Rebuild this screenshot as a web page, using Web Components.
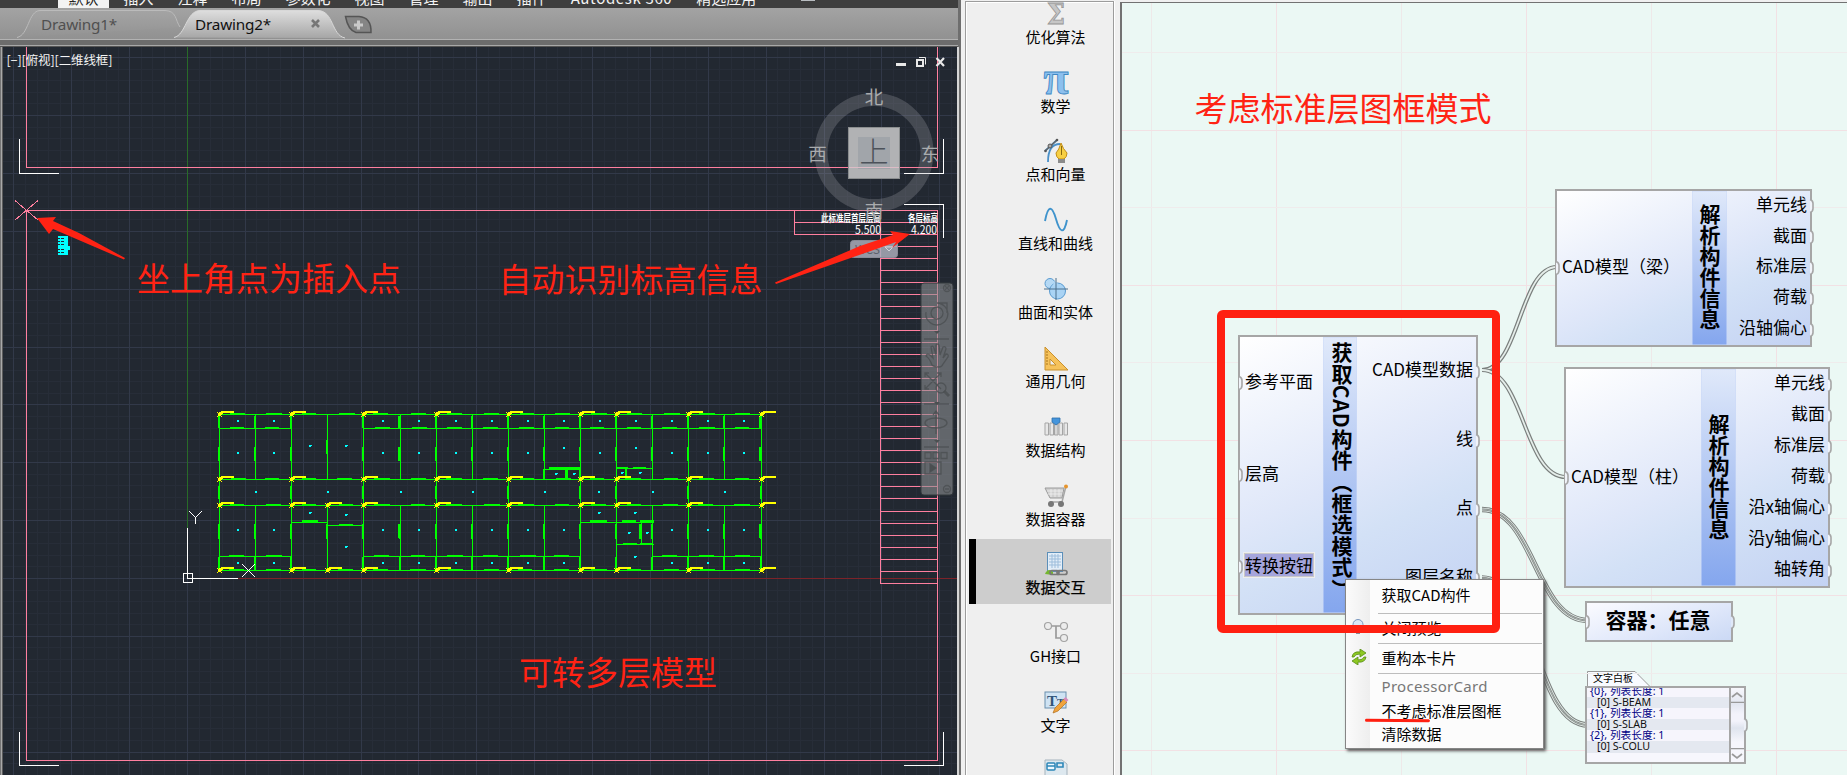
<!DOCTYPE html>
<html lang="zh-CN">
<head>
<meta charset="utf-8">
<title>CAD 构件转换</title>
<style>
html,body{margin:0;height:100%;overflow:hidden;background:#f0f0f0}
body{font-family:"Noto Sans CJK SC","Noto Sans",sans-serif;color:#000}
</style>
</head>
<body>
<work-bench></work-bench>
<script>
const define=(name,html,setup)=>customElements.define(name,class extends HTMLElement{
  connectedCallback(){
    if(this.shadowRoot)return;
    const r=this.attachShadow({mode:'open'});
    r.innerHTML=typeof html==='function'?html(this):html;
    if(setup)setup(this,r);
  }
});

/* ---------- CAD window ---------- */
define('ribbon-menu',`<style>
:host{display:flex;height:8px;overflow:hidden;background:#3e3e3e;color:#f4f4f4;font-size:15px;line-height:20px;gap:9px;padding-left:58px;box-sizing:border-box;white-space:nowrap}
span{margin-top:-12.500px;height:20.500px;padding:0 7.5px}
span.on{background:#f3f3f3;color:#222;padding:0 10.5px;margin-right:-2px}
i{width:14px;height:1px;background:#b8bcc0;margin-left:28px}
</style><span class="on">默认</span><span>插入</span><span>注释</span><span>布局</span><span>参数化</span><span>视图</span><span>管理</span><span>输出</span><span>插件</span><span style="letter-spacing:.65px">Autodesk 360</span><span>精选应用</span><i></i>`);

define('file-tab',el=>{const on=el.hasAttribute('active');return `<style>
:host{display:block;position:relative;width:${on?173:163}px;height:29px;font:15.3px/29px "Noto Sans","Open Sans",sans-serif;color:${on?'#111':'#505050'}}
svg{position:absolute;left:0;top:0}
div{position:relative;padding-left:${on?21:24}px;white-space:nowrap;letter-spacing:-.2px}
</style><svg width="175" height="29"><defs><linearGradient id="g" x2="0" y2="1"><stop stop-color="${on?'#dedede':'#a4a4a4'}"/><stop offset="1" stop-color="${on?'#a6a6a6':'#939393'}"/></linearGradient></defs>
<path d="${on?'M0 27.500C12 25 12 1 26 .5H144C160 1 157 25 171 28':'M0 27.500C12 25 11 1 23 .5H148C160 1 158 10 163 17'}" fill="url(#g)" stroke="${on?'#d8d8d8':'#bbb'}"/></svg>
<div><slot></slot>${on?'<svg width="12" height="12" style="left:136px;top:8px"><path d="M2 2l7 7M9 2l-7 7" stroke="#777" stroke-width="2.600"/></svg>':''}</div>`});

define('tab-strip',`<style>
:host{display:flex;align-items:flex-end;height:32px;background:linear-gradient(#a3a3a3,#919191);border-bottom:1px solid #b2b2b2;padding-left:17px;box-sizing:border-box}
file-tab[active]{margin-left:-6px}
svg{align-self:center;margin:3px 0 0 -3.500px}
</style><file-tab>Drawing1*</file-tab><file-tab active>Drawing2*</file-tab>
<svg width="29" height="20"><path d="M1.500 1.500H15Q27.500 2.500 27 17.500H12Q4 15 1.500 1.500Z" fill="#858585" stroke="#555" stroke-width="1.500"/><path d="M14.500 5.500v9M10 10h9" stroke="#c9c9c9" stroke-width="3"/></svg>`);

const px=(x,y,w,h,c)=>`<rect x="${x}" y="${y}" width="${w}" height="${h}" fill="${c}"/>`;
function gridLines(){
  let minor='',major='';
  for(let k=-16;k<=67;k++){const x=Math.round(187+k*57.87/5);if(x<3||x>956)continue;
    if(k%5)minor+=px(x,47,1,728,'#272d38');else major+=px(x,47,1,728,'#323949');}
  for(let k=-46;k<=17;k++){const y=Math.round(578+k*57.87/5);if(y<47||y>774)continue;
    if(k%5)minor+=px(3,y,954,1,'#272d38');else major+=px(3,y,954,1,'#323949');}
  return minor+major;
}
function plan(){
  const X=[219,255,291,327,363,400,436,472,508,544,580,616,652,688,724,761],G='#00ff00';let s='',n=3;
  const rnd=()=>(n=(n*73+41)%101)/101;
  const h=(a,b,y)=>{s+=px(a,y,b-a+1,1,G)};
  const v=(x,a,b)=>{s+=px(x,a,1,b-a+1,G)};
  const tagH=(x,y)=>{s+=px(x+10+Math.round(rnd()*2),y-1,14+Math.round(rnd()*2),1,G)};
  const tagV=(x,y,l)=>{s+=px(x-1,y,1,l,G)};
  for(const y of [414,479,505,570])h(219,761,y);
  h(219,291,428);h(363,761,428);h(219,291,556);h(363,580,556);h(652,761,556);
  h(291,327,522);h(327,363,525);h(544,580,469);h(616,652,468);h(580,653,522);h(616,653,544);
  X.forEach((x,i)=>{
    const main=[219,291,363,436,508,580,616,688,761].includes(x);
    v(x,414,479);v(x,505,570);if(main)v(x,479,505);
    if(x!==327)tagV(x,416,12);
    tagV(x,x===327?440:447,14);
    if(main)tagV(x,486,13);
    tagV(x,524,15);if(x!==327)tagV(x,557,13);
    if(x===400||x===761){tagV(x-1,416,12);tagV(x-1,447,14);tagV(x-1,524,14);}
    if(i<15)for(const y of [414,428,479,505,556,570]){
      if((y===428||y===556)&&(x===291||x===327))continue;
      if(y===556&&(x===580||x===616))continue;
      tagH(x,y);
    }
  });
  s+=px(302,520,16,2,G)+px(339,524,14,1,G)+px(549,467,20,2,G)+px(567,467,12,2,G)+px(565,468,3,12,G)+px(616,467,12,2,G)+px(633,467,13,1,G)+px(543,469,2,11,G)+px(579,467,1,12,G)+px(625,468,2,11,G)+px(590,520,17,2,G)+px(622,520,14,2,G)+px(640,520,14,2,G)+px(641,522,1,22,G)+px(639,524,2,15,G)+px(623,543,14,1,G)+px(640,543,13,2,G);
  const Y='#ffff00';
  for(const y of [414,479,505,570])for(const x of [219,291,327,363,436,508,580,616,688,761]){
    if(x===327&&y<500)continue;
    s+=px(x+2,y-3,13,2,Y)+px(x,y-2,4,2,Y)+px(x-1,y-1,3,3,Y)+px(x-2,y-2,1,1,Y)+px(x+2,y+2,1,1,Y)+px(x-2,y+2,1,1,Y)+px(x+2,y,1,1,Y);
    if(y===414)s+=px(x+2,y-2,10,1,Y);
  }
  const C='#00ffff',d=(x,y)=>{s+=px(x-1,y-1,2,2,C)};
  [237,273,382,418,455,491,527,563,599,635,671,707,743].forEach(x=>{d(x+1,421);d(x+1,x===563||x===635?448:453);if(x!==599&&x!==635){d(x+1,530);d(x+1,563)}});
  [256,328,401,473,545,599,653,725].forEach(x=>d(x,492));
  [[310,446],[346,446],[310,513],[346,515],[346,547],[599,513],[635,513],[629,533],[647,533],[635,557],[556,474],[574,474],[622,473],[640,473]].forEach(p=>{d(...p);s+=px(p[0]+1,p[1]-1,1,1,C)});
  return s;
}
function frames(){
  const P='#ff7f9f',W='#fff';let s='';
  s+=px(26,47,1,121,P)+px(26,167,912,1,P)+px(937,47,1,121,P);
  s+=px(26,210,912,1,P)+px(26,210,1,551,P)+px(26,760,912,1,P)+px(937,210,1,551,P);
  s+=px(19,139,1,35,W)+px(19,173,40,1,W)+px(943,139,1,35,W)+px(904,173,40,1,W)+px(904,204,40,1,W)+px(943,204,1,34,W)+px(19,732,1,34,W)+px(19,765,40,1,W)+px(943,732,1,34,W)+px(904,765,40,1,W);
  s+=`<path d="M15 200.500l23 19.500M38 200.500L15 220" stroke="${P}"/>`;
  s+=px(794,210,1,25,P)+px(794,222,144,1,P)+px(794,234,144,1,P)+px(880,222,1,362,P);
  for(let i=0;i<29;i++)s+=px(880,246+i*12+(i>21?1:0),58,1,P);
  return s;
}
define('cad-view',()=>`<style>
:host{display:block;height:100%;position:relative;overflow:hidden;background:#222831}
svg{display:block;position:absolute;left:-3px;top:-47px}
text{font-family:"Noto Sans CJK SC",sans-serif}
</style><svg width="960" height="775" shape-rendering="crispEdges">
${gridLines()}
${px(187,47,1,481,'#286b28')}${px(238,578,719,1,'#7d2329')}
${frames()}
<g fill="#fff"><text x="821" y="222" font-size="10.500" font-weight="700" textLength="60" lengthAdjust="spacingAndGlyphs">此标准层首层层高</text>
<text x="908" y="222" font-size="10.500" font-weight="700" textLength="30" lengthAdjust="spacingAndGlyphs">各层标高</text>
<text x="855" y="234" font-size="11.500" textLength="26" lengthAdjust="spacingAndGlyphs">5.500</text>
<text x="911" y="234" font-size="11.500" textLength="26" lengthAdjust="spacingAndGlyphs">4.200</text></g>
${plan()}
${[236,239,242,245,247,250,253].map(y=>px(58,y,10,2,'#0ff')).join('')}${px(64,236,4,19,'#0ff')}${px(68,246,2,4,'#0ff')}${px(60,236,1,19,'#0ff')}
<g fill="none" stroke="#fff"><path d="M187.500 528V578.500H238M183.500 573.500h9v9h-9zM189 511l6.500 6.500v6M202 511l-6.500 6.500"/><path d="M242 564l13 13M255 564l-13 13"/></g>
<g shape-rendering="auto">
<circle cx="874" cy="152.500" r="53" fill="none" stroke="#a5a8ae" stroke-opacity=".27" stroke-width="13"/>
<rect x="848.500" y="127.500" width="51" height="51" fill="#b1b2b4" stroke="#8b8e8f"/><rect x="858" y="137" width="32" height="32" fill="#a1a5aa"/>
<rect x="849" y="167" width="50" height="1" fill="#dcbcc6"/>
<text x="874" y="162.500" font-size="29" font-weight="300" text-anchor="middle" fill="#4c525a">上</text>
<g fill="#a9abad" font-size="18.500" text-anchor="middle"><text x="874" y="104">北</text><text x="817.500" y="160.500">西</text><text x="930" y="160.500">东</text><text x="874" y="218">南</text></g>
<rect x="850.500" y="240.500" width="47" height="17" rx="3" fill="#a9abb9" fill-opacity=".85" stroke="#888b96"/><text x="855" y="253.500" font-size="12" fill="#5d616c">WCS</text><path d="M885 247h8l-4 4z" fill="none" stroke="#d3d4da"/>
<rect x="921" y="283" width="32" height="212" rx="3" fill="#8d9092" fill-opacity=".6" stroke="#33383c"/>
<g fill="none" stroke="#4b4f51" stroke-opacity=".8" stroke-width="1.300"><circle cx="947" cy="288" r="3.500"/><path d="M945 286l4 4m0-4l-4 4M926 312a11 11 0 1 0 11-9h10v10"/><circle cx="937" cy="313" r="6"/>
<path d="M932 365q-2-6-6-9 1-3 4-1l3 3-2-11q2-2 3 1l2 7v-10q2-2 3 0l1 10 3-8q3-1 3 2l-3 9 3-4q3 0 2 3l-5 7q-1 3-4 3-5 0-7-2z"/><path d="M925 373l16 16M941 373l-16 16M925 377v-4h4M937 373h4v4M925 385v4h4"/><circle cx="941" cy="388" r="5"/><path d="M944 391l5 5" stroke-width="3"/>
<ellipse cx="936" cy="423" rx="11" ry="5"/><path d="M936 434v-22m-3 3l3-4 3 4M925 452.500h6v6h-6zM933 452.500h6v6h-6zM941 452.500h6v6h-6zM925 462h16v12h-16z"/><path d="M930 464v8l6-4z" fill="#4b4f51"/><circle cx="947" cy="489" r="3.500"/><path d="M945 489h4M924 339h25M924 404h25M924 447h25" /></g>
<g fill="#4b4f51"><path d="M934 331h6l-3 3zM934 402h6l-3 3zM934 440h6l-3 3z"/></g>
<g fill="#e9e9e9" stroke="none"><rect x="896" y="63" width="10" height="3"/></g><g fill="none" stroke="#e9e9e9"><rect x="917" y="60" width="6" height="6" stroke-width="2"/><path d="M919 57.500h6.500v7"/><path d="M936.500 58l7.500 8M944 58l-7.500 8" stroke-width="2.200"/></g>
<text x="6.500" y="65" font-size="12.500" fill="#f4f4f4" textLength="106">[−][俯视][二维线框]</text>
<g fill="#ff2314"><path d="M37 218L56 217L53 221L79 233L125 258L124 259.500L74 238L53 229L49 234ZM910 234L890 231L893 235L860 246L775 282.500L776 284L865 253L896 242L892 248Z"/>
<g font-size="33" font-weight="400"><text x="137" y="290.500" textLength="264">坐上角点为插入点</text><text x="498.500" y="291.500" textLength="264">自动识别标高信息</text><text x="519" y="685" textLength="198">可转多层模型</text></g></g>
</g></svg>`);

define('cad-window',`<style>
:host{display:grid;grid-template-rows:8px 32px 7px 1fr;width:962px;height:775px;box-sizing:border-box}
.band{background:linear-gradient(#6c6c6c 0 5px,#a8a8a8 5px 6px,#555 6px);margin-right:4px}
ribbon-menu,tab-strip{margin-right:4px}
.body{display:grid;grid-template-columns:3px 954px 5px;min-height:0}
.l{background:linear-gradient(90deg,#747474 0 1px,#a9a9a9 1px 2px,#5c5c5c 2px)}
.r{background:linear-gradient(90deg,#d6d6d6 0 2px,#6e6e6e 2px 4px,#f0f0f0 4px)}
:host{background:linear-gradient(90deg,#6e6e6e 961px,#f0f0f0 961px)}
</style><ribbon-menu></ribbon-menu><tab-strip></tab-strip><div class="band"></div><div class="body"><div class="l"></div><cad-view></cad-view><div class="r"></div></div>`);

/* ---------- Category list ---------- */
const icons={
sum:'<text x="12" y="21.500" font-family="DejaVu Serif" font-weight="700" font-size="27" text-anchor="middle" textLength="18" lengthAdjust="spacingAndGlyphs" fill="#c6c6c6" stroke="#949494" stroke-width=".8">Σ</text>',
pi:'<text x="12" y="23" font-family="Liberation Serif" font-weight="700" font-size="48" text-anchor="middle" textLength="25" lengthAdjust="spacingAndGlyphs" fill="#8cc0ee" stroke="#3f88c4" stroke-width=".9">π</text>',
pen:'<path d="M4 23q0-18 12-18M1 12l12-11" fill="none" stroke="#4a90c8" stroke-width="1.800"/><path d="M1 12l12-11" stroke="#666" stroke-width="1.500"/><circle cx="6" cy="7" r="2" fill="#aaa" stroke="#555"/><circle cx="1.500" cy="12" r="1.300" fill="#555"/><circle cx="13" cy="1" r="1.300" fill="#555"/><path d="M17 4q-2 7-5 10 0 4 3 6h5q3-2 3-6-4-4-6-10z" fill="#f7cf43" stroke="#c18d16"/><path d="M17.500 7v9" stroke="#8a6a10"/><path d="M14 20h7v4h-7z" fill="#8b8b8b"/>',
sine:'<path d="M1 13C4-3 8-3 12 11S20 27 23 12" fill="none" stroke="#3f93cc" stroke-width="1.900"/>',
solid:'<circle cx="6" cy="6.500" r="5" fill="#b5d9f5" stroke="#5a9bd0"/><circle cx="13.500" cy="14" r="8" fill="#a9d3f4" stroke="#5a9bd0"/><path d="M7 10q4-4 3-6l4 3z" fill="#b1d7f5"/><path d="M0 12h24M12 1v22" stroke="#4b6f8c"/>',
tri:'<path d="M1 1v23h23zM6 13v6h6z" fill="#f6c25b" stroke="#c9902c" fill-rule="evenodd"/><path d="M2 6h2m-2 3h2m-2 3h2m-2 3h2m-2 3h2" stroke="#a8751c"/>',
struct:'<g transform="translate(0 1)"><path d="M1 7h3.500v12H1zM6 7h3.500v12H6zM15 7h3.500v12h-3.500zM20 7h3.500v12h-3.500z" fill="#e8e8e8" stroke="#a5a5a5"/><path d="M10.500 8h3.500v11h-3.500z" fill="#d6d6d6" stroke="#a5a5a5"/><path d="M8 2h8v4l-4 3-4-3z" fill="#4595dc" stroke="#2f6fa9" stroke-width=".800"/></g>',
cart:'<path d="M1 4h19l-2 10H6z" fill="#cfcfcf" stroke="#9b9b9b"/><path d="M3 7h16M4 10h14M7 5v8m4-8v8m4-8v8" stroke="#f0f0f0" stroke-width=".8"/><path d="M22 2l-4 16H6" fill="none" stroke="#a6a6a6" stroke-width="1.500"/><circle cx="22" cy="2.500" r="2" fill="#e6942c"/><circle cx="7" cy="20" r="3" fill="#777"/><circle cx="17" cy="20" r="3" fill="#777"/>',
link:'<rect x="3.500" y=".500" width="15" height="19" fill="#e2edf8" stroke="#5c8fb9"/><path d="M5 4h12M5 7h12M5 10h12M5 13h12M8 2v14M11 2v14M14 2v14" stroke="#9dbddb"/><path d="M1 22q3-7 8-2v3z" fill="#74b62e"/><g fill="none" stroke="#777" stroke-width="1.700"><rect x="6" y="18.500" width="9" height="4" rx="2"/><rect x="13" y="18.500" width="10" height="4" rx="2"/></g>',
tree:'<path d="M4 5h15M12 5v12h7" fill="none" stroke="#9a9a9a" stroke-width="1.700"/><g fill="#ececec" stroke="#a2a2a2" stroke-width="1.200"><circle cx="4" cy="5" r="3.500"/><circle cx="20" cy="5" r="3.500"/><circle cx="20" cy="17" r="3.500"/></g>',
text:'<rect x="1" y="2" width="21" height="16" fill="#cfe3f3" stroke="#6a8fae"/><text x="3" y="16" font-family="Liberation Serif" font-weight="700" font-size="15" fill="#315579">T<tspan font-size="11">T</tspan></text><path d="M9 23l2-5 9-9 3 3-9 9z" fill="#f0a33d" stroke="#b07020" stroke-width=".700"/><path d="M19.500 9l2-2 3 3-2 2z" fill="#d68abc"/>',
data:'<path d="M1 1h17l5 4v18H1z" fill="#dde8ef" stroke="#a4b3bd"/><rect x="3" y="4" width="8" height="7" rx="1" fill="#eef8ff" stroke="#2d86b8" stroke-width="1.500"/><path d="M3 7h8M13 4h6v4h-6z" fill="none" stroke="#2d86b8" stroke-width="1.600"/>'};
define('category-item',el=>`<style>
:host{display:flex;flex-direction:column;align-items:center;box-sizing:border-box;height:65px;margin-bottom:3.83px;padding-left:31px;font-size:15px;line-height:22px;position:relative;flex:none}
:host([selected]){background:#cdcdcd;box-shadow:inset 7px 0 #000;-webkit-text-stroke:.25px #000}
svg{margin:13px 0 0;flex:none;overflow:visible;-webkit-text-stroke:0}
</style><svg width="24" height="24">${icons[el.getAttribute('icon')]}</svg><span><slot></slot></span>`);
define('category-list',`<style>
:host{display:block;width:158px;height:775px;padding:1px 6px 0 3px;box-sizing:border-box;background:#f0f0f0}
.frame{border:solid #9c9c9c;border-width:1px 1px 0;box-shadow:inset 1px 1px #fff,1px 0 #fff;height:775px;overflow:hidden;box-sizing:border-box;padding:0 2px 0 3px;display:flex;flex-direction:column;background:#efefef}
category-item:first-child{margin-top:-13.300px}
</style><div class="frame"><category-item icon="sum">优化算法</category-item><category-item icon="pi">数学</category-item><category-item icon="pen">点和向量</category-item><category-item icon="sine">直线和曲线</category-item><category-item icon="solid">曲面和实体</category-item><category-item icon="tri">通用几何</category-item><category-item icon="struct">数据结构</category-item><category-item icon="cart">数据容器</category-item><category-item icon="link" selected>数据交互</category-item><category-item icon="tree">GH接口</category-item><category-item icon="text">文字</category-item><category-item icon="data"></category-item></div>`);

/* ---------- Node canvas ---------- */
const bump='<svg class="p" width="7" height="14"><path d="M1 .5q3 1 3 4v5q0 3-3 4" fill="#f1f4fa" stroke="#a6a6a6" stroke-width="1.600"/></svg>';
define('flow-node',el=>{
  const ins=el.getAttribute('in').split('|'),outs=el.getAttribute('out').split('|'),w=el.getAttribute('bar').split(',');
  return `<style>
:host{position:absolute;display:grid;grid-template-columns:${w[0]}px ${w[1]}px 1fr;box-sizing:border-box;border:2px solid #a6a6a6;background:linear-gradient(155deg,#fff,#dfe7f9 50%,#d3e1f6 66%,#c3d2f3);font-size:17px;line-height:22px;white-space:nowrap}
.c{display:flex;flex-direction:column;padding:0}
.c div{flex:1;display:flex;align-items:center;position:relative;padding:0 0 4px 5px}
.o div{justify-content:flex-end;padding:0 3px 5px 0}
.t{background:linear-gradient(#e0e9fa,#a4bdf1 65%,#84a6ee);display:flex;align-items:center;justify-content:center;box-shadow:inset 0 0 0 .5px #ccdaf8;min-height:0}
.t span{writing-mode:vertical-rl;font-weight:700;font-size:21px;line-height:21px;margin-top:-2px}
:host([long]) .t span{letter-spacing:.4px;margin:-8px 0 0 3px}
.p{position:absolute;top:calc(50% - 7px)} .c .p{left:-2px} .o .p{left:auto;right:-6px}
em{font-style:normal;background:#a5a5dc;box-shadow:0 0 0 1px #c8c8c8,0 0 0 2px #eee}
</style><div class="c">${ins.map(t=>`<div>${bump}${t==='转换按钮'?`<em>${t}</em>`:t}</div>`).join('')}</div><div class="t"><span><slot></slot></span></div><div class="c o">${outs.map(t=>`<div>${t}${bump}</div>`).join('')}</div>`});

define('value-node',`<style>
:host{position:absolute;display:flex;align-items:center;justify-content:center;box-sizing:border-box;border:2px solid #a6a6a6;background:linear-gradient(160deg,#fbfbff,#dfe7fa 60%,#cbd9f5);font-weight:700;font-size:21px;line-height:30px;padding:0 2px 6px 0;white-space:nowrap}
svg{position:absolute;top:12px}
</style><slot></slot><svg style="left:-2px" width="7" height="14"><path d="M1 .5q3 1 3 4v5q0 3-3 4" fill="#f1f4fa" stroke="#a6a6a6" stroke-width="1.600"/></svg><svg style="right:-6px" width="7" height="14"><path d="M1 .5q3 1 3 4v5q0 3-3 4" fill="#dfe8f8" stroke="#a6a6a6" stroke-width="1.600"/></svg>`);

define('text-board',`<style>
:host{position:absolute;display:block;width:161px}
.tab{position:relative;height:15px;margin-left:2px;font-size:10px;line-height:14px;padding-left:6px}
.tab svg{position:absolute;left:0;top:0;z-index:-1}
.box{display:grid;grid-template-columns:1fr 15px;height:78px;box-sizing:border-box;border:2px solid #a6a6a6;background:#f7f7fd;position:relative}
.view{overflow:hidden}
.rows{font:10.700px/11.200px "Noto Sans","Noto Sans CJK SC",sans-serif;white-space:pre;margin-top:-2.500px}
.rows div{height:11.200px;line-height:11.200px;padding-left:3px;color:#000085;background:#f6f5fc}
.rows div:nth-child(even){background:#e4e8f0;color:#111;padding-left:10px;letter-spacing:-.05px;line-height:10.500px}
.s{border-left:2px solid #a6a6a6;display:flex;flex-direction:column;justify-content:space-between;background:linear-gradient(#f7f7fc,#e2e6f0 16px,#f3f3fb 26px,#f3f3fb 33px,#dfe4ee 40px,#f6f6fc 54px)}
.s svg{display:block}
.port{position:absolute;right:-6px;top:30px}
</style><div class="tab"><svg width="64" height="16"><path d="M.5 15.500V.5H48L63 15.500" fill="#f8fbff" stroke="#999"/></svg>文字白板</div>
<div class="box"><div class="view"><div class="rows"><div>{0}, 列表长度: 1</div><div>[0] S-BEAM</div><div>{1}, 列表长度: 1</div><div>[0] S-SLAB</div><div>{2}, 列表长度: 1</div><div>[0] S-COLU</div></div></div>
<div class="s"><svg width="13" height="15"><path d="M1 9l5-4 5 4M0 14.500h13" fill="none" stroke="#999" stroke-width="1.700"/></svg><svg width="13" height="14"><path d="M1 6l5 4 5-4M0 .5h13" fill="none" stroke="#999" stroke-width="1.700"/></svg></div>
<svg class="port" width="7" height="14"><path d="M1 .5q3 1 3 4v5q0 3-3 4" fill="#edf1f8" stroke="#a6a6a6" stroke-width="1.600"/></svg></div>`);

define('context-menu',`<style>
:host{position:absolute;display:block;box-sizing:border-box;width:199px;height:170px;border:1px solid #868686;background:linear-gradient(90deg,#fbfbfb,#eee 24px,#fcfcfc 24px);box-shadow:2px 2px 3px #555;font-size:15px;white-space:nowrap}
div{padding:0 0 3px 35.500px;box-sizing:border-box;display:flex;align-items:center;position:relative;height:var(--h)}
hr{margin:1px 1px 1px 32px;border:0;height:1px;background:#bdbdbd}
svg{position:absolute;left:5px}
.g{color:#777;font-family:"Noto Sans","Open Sans",sans-serif;letter-spacing:.3px}
</style><div style="--h:32px">获取CAD构件</div><hr><div style="--h:27px"><svg width="15" height="18" style="top:3px"><circle cx="7" cy="6.500" r="5" fill="#dbe8f6" stroke="#7896bd"/><path d="M5 12h4v4H5z" fill="#858d98"/></svg>关闭预览</div><hr><div style="--h:27px"><svg width="16" height="16"><path d="M1 8q1-6 8-5V0l6 4-6 4V5Q4 5 3 8zM15 8q-1 6-8 5v3l-6-4 6-4v3q5 0 6-3z" fill="#8dc722" stroke="#568b16" stroke-width=".800"/></svg>重构本卡片</div><hr><div class="g" style="--h:25px">ProcessorCard</div><div style="--h:23px">不考虑标准层图框</div><div style="--h:24px">清除数据</div>`);

function canvasGrid(){let s='';
  for(let i=0;i<6;i++)s+=px(Math.round(1150.500+i*125),3,1,772,i%2?'#f2e1e4':'#eee9e9');
  for(let i=0;i<10;i++)s+=px(1122,Math.round(52.300+i*77.540),725,1,i%2?'#f2e1e4':'#efecec');
  return s}
const wire=(x1,y1,x2,y2,t)=>{const m=(x1+x2)/2,d=`M${x1} ${y1}C${m} ${y1} ${m} ${y2} ${x2} ${y2}`;
  return `<g fill="none"><path d="${d}" stroke="#7a7f7d" stroke-width="${t?5.500:4.200}"/><path d="${d}" stroke="#e5eeea" stroke-width="${t?3.600:1.800}"/>${t?`<path d="${d}" stroke="#7a7f7d" stroke-width="1.800"/><path d="${d}" stroke="#d9e2de" stroke-width=".500"/>`:''}</g>`};
define('node-canvas',`<style>
:host{display:block;position:relative;height:775px;overflow:hidden;background:#ebf8f4}
.world{position:absolute;left:-1120px;top:0;width:1847px;height:775px;isolation:isolate}
.world>svg{position:absolute;left:0;top:0}
.edge{position:absolute;inset:2px 0 0 0;border:solid #727272;border-width:1px 0 0 2px}
.note{position:absolute;left:1194.500px;top:85px;font-size:33px;line-height:44px;color:#ff2314;white-space:nowrap}
.mark{position:absolute;left:1216.500px;top:310px;width:283px;height:323px;box-sizing:border-box;border:8px solid #ff2011;border-radius:6px}
.line{position:absolute;left:1365px;top:719px;width:65px;height:3px;border-radius:2px;background:#ff2011;transform:rotate(.4deg)}
</style><div class="world"><svg width="1847" height="775">${canvasGrid()}<rect x="1120" width="727" height="2" fill="#f0f0f0"/>
${wire(1482,370,1557,267)}${wire(1482,370,1566,477)}${wire(1482,509.500,1588,620.500,1)}${wire(1482,578,1588,725,1)}</svg>
<flow-node long style="left:1238px;top:335px;width:240px;height:280px" bar="83,34" in="参考平面|层高|转换按钮" out="CAD模型数据|线|点|图层名称">获取CAD构件（框选模式）</flow-node>
<flow-node style="left:1555px;top:189px;width:257px;height:158px" bar="135,35" in="CAD模型（梁）" out="单元线|截面|标准层|荷载|沿轴偏心">解析构件信息</flow-node>
<flow-node style="left:1564px;top:367px;width:266px;height:221px" bar="135,35" in="CAD模型（柱）" out="单元线|截面|标准层|荷载|沿x轴偏心|沿y轴偏心|轴转角">解析构件信息</flow-node>
<value-node style="left:1585px;top:601px;width:148px;height:41px">容器：任意</value-node>
<text-board style="left:1585px;top:671px"></text-board>
<context-menu style="left:1345px;top:579px"></context-menu>
<div class="note">考虑标准层图框模式</div><div class="mark"></div><div class="line"></div></div><div class="edge"></div>`);

define('work-bench',`<style>:host{display:grid;grid-template-columns:962px 158px 1fr;width:100%;height:775px;overflow:hidden}</style><cad-window></cad-window><category-list></category-list><node-canvas></node-canvas>`);
</script>
</body>
</html>
